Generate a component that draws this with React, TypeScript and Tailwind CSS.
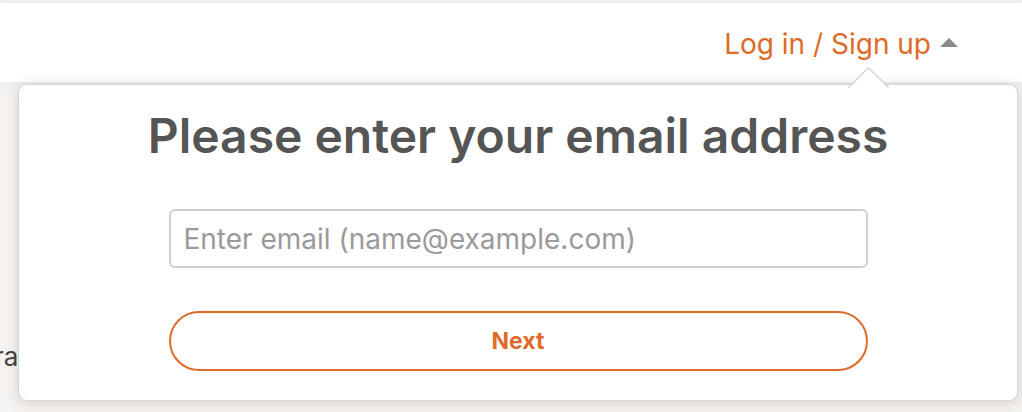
import React from "react";

export default function App() {
  return (
    <div
      className="relative w-[1022px] h-[412px] overflow-hidden bg-[#f5f3f1]"
      style={{ fontFamily: "Inter, 'Noto Sans', sans-serif" }}
    >
      <div className="h-[3px] bg-[#efefef]" />
      <header className="h-[79px] bg-white flex items-center justify-end pr-[64px] shadow-[0_4px_10px_rgba(0,0,0,0.03)]">
        <button className="flex items-center gap-[9px] text-[#e06a28] text-[28px] leading-none pt-[2px]">
          <span>Log in / Sign up</span>
          <svg width="18" height="9" viewBox="0 0 18 9" className="mt-[-2px]">
            <polygon points="9,0 18,9 0,9" fill="#8a8a8a" />
          </svg>
        </button>
      </header>

      <div className="pt-[262px] text-[26px] text-[#444] leading-none ml-[-6px]">
        rather
      </div>

      <div className="absolute left-[18px] top-[84px] w-[1000px] h-[317px] bg-white rounded-[9px] border border-[#d6d6d6] shadow-[0_2px_14px_rgba(60,40,20,0.18)]">
        <div className="absolute left-[835px] top-[-12px] w-[29px] h-[29px] rotate-45 bg-white border-l border-t border-[#c8c8c8]" />
        <div className="relative flex flex-col items-center pt-[24px]">
          <h2 className="text-[48px] font-semibold text-[#555555] leading-[54px]">
            Please enter your email address
          </h2>
          <input
            type="email"
            placeholder="Enter email (name@example.com)"
            className="mt-[46px] w-[699px] h-[59px] rounded-[6px] border-2 border-[#cfcfcf] px-[13px] text-[28px] text-[#333] placeholder:text-[#9a9a9a] outline-none"
          />
          <button className="mt-[43px] w-[699px] h-[60px] rounded-full border-2 border-[#df6b2b] text-[#df6b2b] text-[23px] font-bold">
            Next
          </button>
        </div>
      </div>
    </div>
  );
}
